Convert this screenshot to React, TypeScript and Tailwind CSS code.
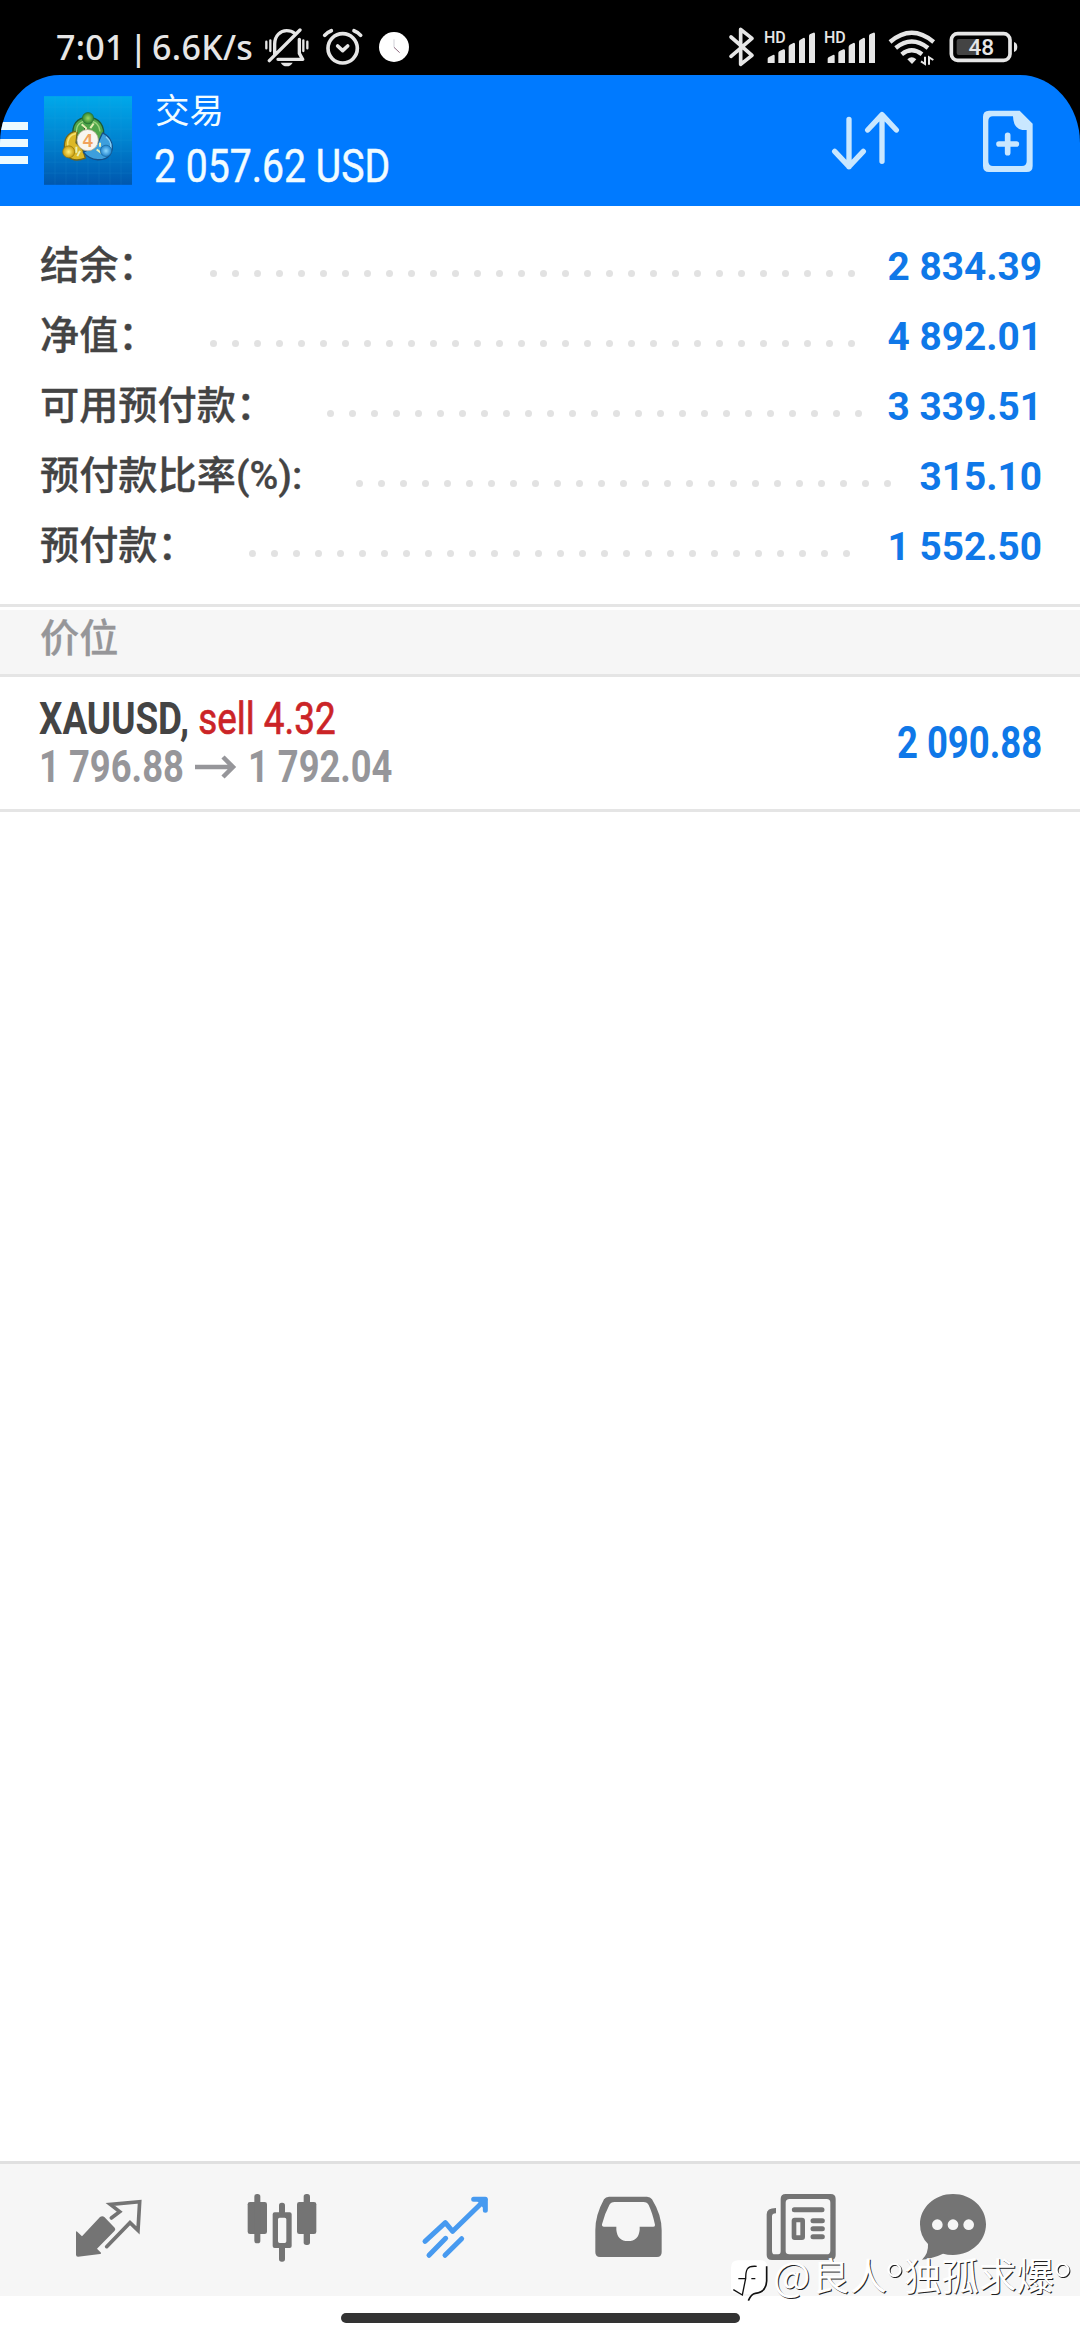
import type { ReactNode } from "react";

const summary = [
  { label: "结余：", value: "2 834.39", dots: 30, gap: "ml-[52px]" },
  { label: "净值：", value: "4 892.01", dots: 30, gap: "ml-[52px]" },
  { label: "可用预付款：", value: "3 339.51", dots: 25, gap: "ml-[52px]" },
  { label: "预付款比率(%):", value: "315.10", dots: 25, gap: "ml-[54px]" },
  { label: "预付款：", value: "1 552.50", dots: 28, gap: "ml-[52px]" },
];

function SignalBars() {
  return (
    <svg width="54" height="40" viewBox="186 72 162 120" fill="#e6e6e6">
      <text x="192" y="129" fontSize="48" fontWeight="500" className="font-['Roboto',sans-serif]">HD</text>
      <path d="M203 189v-13q0-3 4-5l12-6q5-2 5 3v21zM235 189v-30q0-4 4-6l11-5q5-2 5 4v37zM266 189v-48q0-5 4-7l10-5q5-2 5 4v56zM297 189v-64q0-4 4-6l9-5q5-2 5 4v71zM327 189v-81q0-4 4-6l9-4q5-2 5 4v87z" />
    </svg>
  );
}

function StatusBar() {
  return (
    <div className="flex h-[75px] items-start bg-black text-[#e6e6e6]">
      <div className="ml-[56px] mt-[23px] w-[208px] whitespace-pre font-['Noto_Sans',sans-serif] text-[34px] font-medium leading-[48px] tracking-[0.3px] [word-spacing:-5px]">
        7:01 | 6.6K/s
      </div>
      <svg className="mt-[28px]" width="46" height="40" viewBox="790 84 138 120" fill="none" stroke="#e6e6e6" strokeWidth="10" strokeLinecap="round" strokeLinejoin="round">
        <path d="M822 166V132C822 106 840 92 858 92C868 92 876 95 882 100M896 118V160L906 178H832M806 182L898 90" />
        <path d="M797 125v20M809 121v32M908 121v32M920 125v20" strokeWidth="7" />
        <path d="M840 188h36q-6 11-18 11t-18-11z" fill="#e6e6e6" stroke="none" />
      </svg>
      <svg className="ml-[12px] mt-[28px]" width="42" height="38" viewBox="965 84 126 114" fill="none" stroke="#e6e6e6" strokeWidth="11" strokeLinecap="round" strokeLinejoin="round">
        <circle cx="1027" cy="145" r="44" />
        <path d="M1012 138l15 14 15-14M973 106q7-9 20-14M1081 106q-7-9-20-14" />
      </svg>
      <svg className="ml-[14px] mt-[31px]" width="32" height="32" viewBox="1134 93 96 96">
        <circle cx="1182" cy="141" r="45" fill="#fff" />
        <path d="M1182 118v24" stroke="#cfcfd6" strokeWidth="3" />
        <path d="M1182 142l17 16" stroke="#8d6a80" strokeWidth="3" />
      </svg>

      <svg className="ml-[318px] mt-[27px]" width="28" height="40" viewBox="82 81 84 120" fill="none" stroke="#e6e6e6" strokeWidth="11" strokeLinejoin="round" strokeLinecap="round">
        <path d="M91 111l63 55-34 27V88l34 27-63 54" />
      </svg>
      <div className="ml-[6px] mt-[24px] flex gap-[6px]">
        <SignalBars />
        <SignalBars />
      </div>
      <svg className="ml-[12px] mt-[29px]" width="48" height="38" viewBox="561 87 144 114" fill="none" stroke="#e6e6e6" strokeWidth="13">
        <path d="M567 126q65-55 131 0M584 144q48-39 97 0M602 163q30-24 61 0" />
        <path d="M619 178q13-12 27 0l-13 14z" fill="#e6e6e6" stroke="none" />
        <path d="M672 170v22l-12-8M684 194v-22l13 8" strokeWidth="6" />
      </svg>
      <svg className="ml-[13px] mt-[31px]" width="70" height="32" viewBox="745 93 210 96">
        <rect x="752" y="101" width="176" height="80" rx="19" fill="none" stroke="#e6e6e6" strokeWidth="11" />
        <rect x="768" y="117" width="62" height="48" rx="6" fill="#444" />
        <path d="M940 126q10 3 10 15t-10 15z" fill="#e6e6e6" />
        <text x="842" y="166" fontSize="68" fontWeight="500" textAnchor="middle" fill="#e6e6e6" className="font-['Roboto',sans-serif]">48</text>
      </svg>
    </div>
  );
}

function AppLogo() {
  return (
    <svg width="88" height="89" viewBox="132 20 264 266">
      <defs>
        <linearGradient id="tile" x1="0" y1="0" x2="0" y2="1">
          <stop offset="0" stopColor="#00a9ea" />
          <stop offset=".5" stopColor="#0083d0" />
          <stop offset="1" stopColor="#0057ae" />
        </linearGradient>
        <radialGradient id="green"><stop stopColor="#9dd968" /><stop offset="1" stopColor="#2c8430" /></radialGradient>
        <radialGradient id="gold"><stop stopColor="#fff07a" /><stop offset="1" stopColor="#c99b0c" /></radialGradient>
        <radialGradient id="sky"><stop stopColor="#8bd8ff" /><stop offset="1" stopColor="#2083cd" /></radialGradient>
      </defs>
      <rect x="132" y="20" width="264" height="266" fill="url(#tile)" />
      <path d="M165 20v266M198 20v266M231 20v266M264 20v266M297 20v266M330 20v266M363 20v266M132 53h264M132 86h264M132 119h264M132 152h264M132 185h264M132 218h264M132 251h264" stroke="#35b4e6" strokeOpacity=".18" strokeWidth="2" />
      <g strokeLinejoin="round">
        <path d="M220 142c-6-36 10-58 44-58s52 24 46 62l-18 12-28-26-28 14z" fill="#4fa54a" stroke="#1d5a35" strokeWidth="4" />
        <path d="M232 124c-32 4-42 28-38 58 6 28 32 36 62 24l-8-26-20-20z" fill="#dcb826" stroke="#6d6420" strokeWidth="4" />
        <path d="M308 130c28 14 36 44 22 66-16 20-56 22-80-8l20-10 24-18z" fill="#3d9fdd" stroke="#14508a" strokeWidth="4" />
      </g>
      <path d="M230 128c-2-22 12-34 34-34s34 12 36 32" fill="none" stroke="#9bd47e" strokeWidth="4" />
      <path d="M204 172c-4-22 6-36 24-40" fill="none" stroke="#f6e272" strokeWidth="4" />
      <path d="M318 142c16 14 18 30 10 44" fill="none" stroke="#8bd0f5" strokeWidth="4" />
      <path d="M245 104l13 12v10M281 102l-10 14M229 172v18M240 184l-8 16M300 172v-12M290 180l14 10" stroke="#e6efb4" strokeWidth="6" />
      <circle cx="264" cy="86" r="17" fill="url(#green)" stroke="#256b36" strokeWidth="2" />
      <circle cx="206" cy="187" r="18" fill="url(#gold)" stroke="#877213" strokeWidth="2" />
      <circle cx="318" cy="184" r="17" fill="url(#sky)" stroke="#176298" strokeWidth="2" />
      <circle cx="263" cy="152" r="32" fill="#f8f5ef" stroke="#a9a284" strokeWidth="2" />
      <text x="263" y="171" fontSize="54" fontWeight="700" textAnchor="middle" fill="#f0a25c" className="font-['Liberation_Sans',sans-serif]">4</text>
    </svg>
  );
}

function Header() {
  return (
    <div className="bg-black">
      <header className="flex h-[131px] items-start overflow-hidden rounded-t-[60px_68px] bg-[#007aff] text-[#f2fcff]">
        <div className="mt-[47px] flex w-[28px] flex-col gap-[9px]">
          <span className="h-[8px] bg-[#ecfaff]" />
          <span className="h-[8px] bg-[#ecfaff]" />
          <span className="h-[8px] bg-[#ecfaff]" />
        </div>
        <div className="ml-[16px] mt-[21px]">
          <AppLogo />
        </div>
        <div className="ml-[22px] mt-[9px] flex w-[260px] flex-col">
          <div className="h-[52px] pl-[1px] font-['Noto_Sans_CJK_SC',sans-serif] text-[34.5px] leading-[48px]">交易</div>
          <div className="h-[60px] origin-left scale-x-[0.842] whitespace-pre text-[46.5px] leading-[60px] [-webkit-text-stroke:0.5px]">2 057.62 USD</div>
        </div>
        <svg className="ml-[417px] mt-[35px]" width="70" height="62" viewBox="392 330 210 186" fill="none" stroke="#c9e7ff" strokeWidth="16" strokeLinecap="round" strokeLinejoin="round">
          <path d="M446 358v142M403 454l43 46 43-46M545 484V344M502 390l43-46 43 46" />
        </svg>
        <svg className="ml-[81px] mt-[35px]" width="52" height="64" viewBox="847 330 156 192">
          <path d="M868 332h92l39 39v127q0 18-18 18h-113q-18 0-18-18V350q0-18 18-18zM880 349q-14 0-14 14v121q0 14 14 14h87q14 0 14-14V390h-13q-27-4-28-41z" fill="#c9e7ff" fillRule="evenodd" />
          <path d="M924 406v52M898 432h52" stroke="#c9e7ff" strokeWidth="17" strokeLinecap="round" />
        </svg>
      </header>
    </div>
  );
}

function Summary() {
  return (
    <section className="flex flex-col pb-[23px] pt-[25px]">
      {summary.map((row) => (
        <div key={row.label} className="flex h-[70px] items-center pl-[40px] pr-[38px]">
          <span className="whitespace-nowrap font-['Roboto','Noto_Sans_CJK_SC',sans-serif] text-[39.2px] font-medium leading-[70px] text-[#444] [-webkit-text-stroke:0.3px]">
            {row.label}
          </span>
          <span className={`${row.gap} mt-[14px] flex gap-[15px]`}>
            {Array.from({ length: row.dots }, (_, i) => (
              <i key={i} className="size-[7px] shrink-0 rounded-full bg-[#e2e2e2]" />
            ))}
          </span>
          <span className="ml-auto mt-[1px] whitespace-pre text-[38.8px] font-bold leading-[70px] text-[#0f78e8]">{row.value}</span>
        </div>
      ))}
    </section>
  );
}

function Position() {
  return (
    <section className="flex h-[135px] items-start border-b-[3px] border-[#e5e5e5] pl-[39px] pr-[38px]">
      <div className="mt-[18px] flex flex-col">
        <div className="h-[48px] origin-left scale-x-[0.828] whitespace-pre text-[44.5px] leading-[48px]">
          <span className="font-bold text-[#444]">XAUUSD,</span>
          <span className="text-[#cb2427] [-webkit-text-stroke:0.7px]"> sell 4.32</span>
        </div>
        <div className="flex h-[48px] items-center text-[44.5px] font-bold leading-[48px] text-[#96969a]">
          <span className="w-[156px] origin-left scale-x-[0.818] whitespace-pre">1 796.88</span>
          <svg className="mr-[11px]" width="42" height="26" viewBox="0 0 42 26" fill="none" stroke="#96969a" strokeWidth="4.5">
            <path d="M0 13h38M28 3l10 10-10 10" />
          </svg>
          <span className="w-[155px] origin-left scale-x-[0.815] whitespace-pre">1 792.04</span>
        </div>
      </div>
      <div className="ml-auto mt-[36px] origin-right scale-x-[0.82] whitespace-pre text-[44.5px] font-bold leading-[60px] text-[#0f78e8]">
        2 090.88
      </div>
    </section>
  );
}

function NavIcon({ box, children }: { box: string; children: ReactNode }) {
  return (
    <svg width="88" height="90" viewBox={box} fill="#747474" stroke="none" strokeLinejoin="round" strokeLinecap="round">
      {children}
    </svg>
  );
}

function BottomNav() {
  return (
    <nav className="flex h-[135px] border-t-[3px] border-[#e0e0e0] bg-[#f6f6f6] pl-[21px] pt-[16px]">
      <div className="flex w-[174px] justify-center">
        <NavIcon box="12 0 264 270">
          <path d="M50 154l16 15 54-58q7-5 13 0l31 32q4 5 0 9l-53 54 12 12q1 4-3 4l-66 8q-6 0-6-6v-66q0-6 2-4z" />
          <path d="M154 114l25-19-28-22 88-8-5 86-24-23-70 72" fill="none" stroke="#747474" strokeWidth="11" strokeLinejoin="miter" />
        </NavIcon>
      </div>
      <div className="flex w-[173px] justify-center">
        <NavIcon box="531 0 264 270">
          <rect x="560" y="66" width="58" height="96" rx="7" />
          <rect x="580" y="42" width="18" height="148" rx="8" />
          <rect x="708" y="66" width="58" height="96" rx="7" />
          <rect x="728" y="42" width="19" height="153" rx="8" />
          <rect x="654" y="68" width="18" height="36" rx="8" />
          <rect x="654" y="196" width="18" height="49" rx="8" />
          <path d="M641 97h45q6 0 6 6v95q0 6-6 6h-45q-6 0-6-6v-95q0-6 6-6zM656 113q-5 0-5 5v66q0 5 5 5h15q5 0 5-5v-66q0-5-5-5z" fillRule="evenodd" />
        </NavIcon>
      </div>
      <div className="flex w-[173px] justify-center">
        <NavIcon box="1050 0 264 270">
          <g fill="none" stroke="#479af0" strokeWidth="15">
            <path d="M1092 184l61-56 22 26 97-95M1104 226l50-51M1152 226l50-50" />
            <path d="M1238 58h35v33" />
          </g>
          <path d="M1244 58h30v34z" fill="#479af0" />
        </NavIcon>
      </div>
      <div className="flex w-[173px] justify-center">
        <NavIcon box="9 0 264 270">
          <path d="M84 50h114q10 0 15 8 29 47 29 93v66q0 14-14 14H57q-14 0-14-14v-66q0-46 26-93 5-8 15-8zM101 66q-12 0-16 9-14 26-22 58-1 7 6 7h37v9q3 34 35 34t35-34v-9h41q6 0 5-6-8-36-19-59-4-9-16-9z" fillRule="evenodd" />
        </NavIcon>
      </div>
      <div className="flex w-[174px] justify-center">
        <NavIcon box="531 0 264 270">
          <path d="M617 42h135q15 0 15 15v168q0 15-15 15H576q-16 0-16-15V103q0-19 28-19v16q-12 0-12 9v103q0 11 8 11h11q7 0 7-9V57q0-15 15-15zM629 57q-12 0-12 11v145q0 10 11 10h112q11 0 11-11V68q0-11-11-11z" fillRule="evenodd" />
          <path d="M643 89h83M699 122h28M699 146h28M699 170h28" stroke="#747474" strokeWidth="15" />
          <rect x="642" y="120" width="26" height="53" rx="2" fill="none" stroke="#747474" strokeWidth="14" />
        </NavIcon>
      </div>
      <div className="flex w-[130px] justify-center">
        <NavIcon box="987 0 264 270">
          <path d="M1119 42c56 0 99 41 99 91s-43 92-99 92q-17 0-30-4-29 14-63 18 20-19 18-47-24-23-24-59c0-50 43-91 99-91z" />
          <g fill="#f6f6f6">
            <circle cx="1072" cy="134" r="16" />
            <circle cx="1119" cy="134" r="16" />
            <circle cx="1166" cy="134" r="16" />
          </g>
        </NavIcon>
      </div>
    </nav>
  );
}

function Watermark() {
  return (
    <div className="absolute left-[729px] top-[2255px] flex items-start whitespace-nowrap font-['Noto_Sans_CJK_SC',sans-serif] text-[37.5px] leading-[38px] text-white [text-shadow:1px_1px_0_#222]">
      <svg width="44" height="50" viewBox="27 18 132 150" fill="none">
        <path d="M55 34h68q18 0 18 18v48q0 36-48 36l-52-4q-8-4-8-16V56q0-22 22-22z" fill="#fff" />
        <path d="M140 52v44q-2 34-34 37-12 1-21 22" stroke="#111" strokeWidth="5" />
        <path d="M110 52q-22-2-28 8-5 8-5 29h-22M77 88l-10 50-27-16M94 89h12" stroke="#111" strokeWidth="4" />
      </svg>
      <span className="w-[39px] text-[39.5px]">@</span>
      <span className="w-[73px]">良人</span>
      <span className="w-[19px] pt-[7px] text-[54px] font-light">°</span>
      <span className="w-[149px]">独孤求爆</span>
      <span className="w-[19px] pt-[7px] text-[54px] font-light">°</span>
    </div>
  );
}

export default function App() {
  return (
    <div className="relative flex h-[2340px] w-[1080px] flex-col overflow-hidden bg-white font-['Roboto',sans-serif]">
      <StatusBar />
      <Header />
      <Summary />
      <div className="mb-[3px] h-[3px] bg-[#e5e5e5]" />
      <div className="h-[67px] border-b-[3px] border-[#e5e5e5] bg-[#f6f6f6] pl-[40px] font-['Noto_Sans_CJK_SC',sans-serif] text-[39.2px] font-medium leading-[51px] text-[#969699] [-webkit-text-stroke:0.3px]">
        价位
      </div>
      <Position />
      <div className="flex-1" />
      <BottomNav />
      <div className="flex h-[44px] justify-center pt-[17px]">
        <div className="h-[10px] w-[399px] rounded-full bg-[#333]" />
      </div>
      <Watermark />
    </div>
  );
}
